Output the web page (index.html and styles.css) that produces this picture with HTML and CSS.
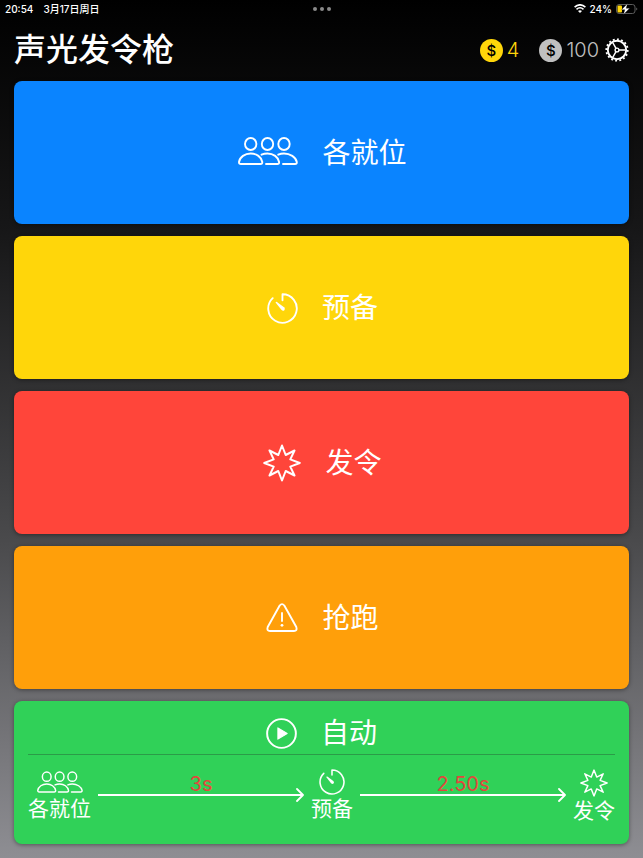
FILE: index.html
```html
<!DOCTYPE html>
<html lang="zh-CN">
<head>
    <meta charset="UTF-8">
    <meta name="viewport" content="width=device-width, initial-scale=1.0">
    <title>声光发令枪</title>
    <link rel="stylesheet" href="styles.css">
</head>
<body>
    <!-- 图标定义 -->
    <svg class="defs" aria-hidden="true">
        <symbol id="icon-people" viewBox="0 0 60 28">
            <g fill="none" stroke="currentColor" stroke-width="1.9" stroke-linejoin="round" stroke-linecap="round">
                <ellipse cx="12.700" cy="7" rx="5.700" ry="6"/>
                <ellipse cx="29.500" cy="7" rx="5.700" ry="6"/>
                <ellipse cx="46" cy="7" rx="5.700" ry="6"/>
                <path d="M3 27H22.500Q24.500 27 24.300 25C23.500 20 18.500 16.500 12.700 16.500S1.800 20 1 25Q.9 27 3 27Z"/>
                <path d="M23.500 17.700C25.300 16.900 27.300 16.500 29.500 16.500C35.300 16.500 40.300 20 41.100 25Q41.300 27 39.300 27H28"/>
                <path d="M40.200 17.700C42 16.900 43.900 16.500 46 16.500C52 16.500 57.800 20 58.800 25Q59 27 57 27H45"/>
            </g>
        </symbol>
        <symbol id="icon-timer" viewBox="0 0 30 30">
            <path d="M5.500 5A13.800 13.800 0 1 0 15 1.200V7" fill="none" stroke="currentColor" stroke-width="1.8" stroke-linecap="round" stroke-linejoin="round"/>
            <path d="M8.300 9.200Q8.600 8.300 9.600 8.700L16.500 13.800Q18 15.400 16.800 16.700Q15.400 17.900 13.900 16.300Z" fill="currentColor"/>
        </symbol>
        <symbol id="icon-burst" viewBox="0 0 38 38">
            <path d="M19 1.500L22.700 11L31.500 6.500L27.300 15.400L36.800 19L27.300 22.600L31.500 31.500L22.700 27L19 36.500L15.300 27L6.500 31.500L10.700 22.600L1.200 19L10.700 15.400L6.500 6.500L15.300 11Z" fill="none" stroke="currentColor" stroke-width="2" stroke-linejoin="round"/>
        </symbol>
        <symbol id="icon-warning" viewBox="0 0 32 30">
            <path d="M13.700 2.500Q16 -.3 18.300 2.500L30.300 24Q31.500 28 28 28H4Q.5 28 1.700 24Z" fill="none" stroke="currentColor" stroke-width="1.900" stroke-linejoin="round"/>
            <path d="M16 10V18" stroke="currentColor" stroke-width="1.900" stroke-linecap="round"/>
            <circle cx="16" cy="22.300" r="1.400" fill="currentColor"/>
        </symbol>
        <symbol id="icon-play" viewBox="0 0 30 30">
            <circle cx="15" cy="15" r="13.900" fill="none" stroke="currentColor" stroke-width="1.900"/>
            <path d="M11.500 9.500L20.500 15L11.500 20.500Z" fill="currentColor" stroke="currentColor" stroke-linejoin="round"/>
        </symbol>
        <symbol id="icon-arrow" viewBox="0 0 10 14">
            <path d="M3 1L9 7L3 13" fill="none" stroke="currentColor" stroke-width="1.800" stroke-linecap="round" stroke-linejoin="round"/>
        </symbol>
    </svg>

    <div class="status-bar">
        <div class="status-left">
            <span>20:54</span>
            <span>3月17日周日</span>
        </div>
        <div class="dots"><i></i><i></i><i></i></div>
        <div class="status-right">
            <svg class="wifi" viewBox="0 0 12 9" aria-hidden="true">
                <g fill="none" stroke="currentColor" stroke-width="1.600">
                    <path d="M.6 3.200Q6 -1.600 11.400 3.200"/>
                    <path d="M2.500 5.300Q6 2.200 9.500 5.300"/>
                </g>
                <path d="M4 7Q6 5.300 8 7L6 9Z" fill="currentColor"/>
            </svg>
            <span>24%</span>
            <svg class="battery" viewBox="0 0 22 12" aria-hidden="true">
                <rect x=".5" y="1.500" width="18.500" height="9" rx="2.500" fill="none" stroke="#5c5c5c"/>
                <path d="M20.300 4.500Q22.300 6 20.300 7.500Z" fill="#6c6c6c"/>
                <rect x="1.500" y="2.500" width="4.500" height="7" rx="1" fill="#ffd60a"/>
                <path d="M11.500 .5L5.500 6.700H8.800L7.500 11.500L13.700 5.300H10.200Z" fill="#fff" stroke="#000" stroke-width=".3"/>
            </svg>
        </div>
    </div>

    <header class="header">
        <h1>声光发令枪</h1>
        <div class="coins">
            <div class="coin gold"><span class="coin-icon">$</span><span>4</span></div>
            <div class="coin silver"><span class="coin-icon">$</span><span>100</span></div>
            <button class="settings" aria-label="设置">
                <svg viewBox="0 0 24 24" aria-hidden="true">
                    <g fill="none" stroke="currentColor">
                        <circle cx="12" cy="12" r="9.200" stroke-width="1.900"/>
                        <circle cx="12" cy="12" r="10.700" stroke-width="1.800" pathLength="64" stroke-dasharray="1.800 2.200"/>
                        <circle cx="12" cy="12" r="1.900" stroke-width="1.400"/>
                        <path d="M14 12H20.500M11 10.300L7.700 4.500M11 13.700L7.700 19.500" stroke-width="1.500"/>
                    </g>
                </svg>
            </button>
        </div>
    </header>

    <main class="panel">
        <button class="card blue">
            <svg class="icon-people" aria-hidden="true"><use href="#icon-people"/></svg>
            <span>各就位</span>
        </button>
        <button class="card yellow">
            <svg class="icon-round" aria-hidden="true"><use href="#icon-timer"/></svg>
            <span>预备</span>
        </button>
        <button class="card red">
            <svg class="icon-burst" aria-hidden="true"><use href="#icon-burst"/></svg>
            <span>发令</span>
        </button>
        <button class="card orange">
            <svg class="icon-warning" aria-hidden="true"><use href="#icon-warning"/></svg>
            <span>抢跑</span>
        </button>

        <section class="card green">
            <button class="auto">
                <svg class="icon-round" aria-hidden="true"><use href="#icon-play"/></svg>
                <span>自动</span>
            </button>
            <div class="steps">
                <div class="step">
                    <svg class="step-people" aria-hidden="true"><use href="#icon-people"/></svg>
                    <span>各就位</span>
                </div>
                <div class="delay">
                    <span>3s</span>
                    <div class="line"><svg aria-hidden="true"><use href="#icon-arrow"/></svg></div>
                </div>
                <div class="step">
                    <svg class="step-timer" aria-hidden="true"><use href="#icon-timer"/></svg>
                    <span>预备</span>
                </div>
                <div class="delay">
                    <span>2.50s</span>
                    <div class="line"><svg aria-hidden="true"><use href="#icon-arrow"/></svg></div>
                </div>
                <div class="step">
                    <svg class="step-burst" aria-hidden="true"><use href="#icon-burst"/></svg>
                    <span>发令</span>
                </div>
            </div>
        </section>
    </main>
</body>
</html>
```
FILE: styles.css
```css
* {
    box-sizing: border-box;
}

body {
    margin: 0;
    min-height: 100vh;
    display: flex;
    flex-direction: column;
    background: linear-gradient(#000, #171718 27%, #4a4a4c 63%, #8e8e93);
    color: #fff;
    font-family: Inter, "Noto Sans CJK SC", sans-serif;
}

button {
    border: none;
    padding: 0;
    background: none;
    color: inherit;
    font: inherit;
    cursor: pointer;
}

svg {
    display: block;
    flex: none;
}

.defs {
    position: absolute;
    width: 0;
    height: 0;
}

/* 状态栏 */
.status-bar {
    display: grid;
    grid-template-columns: 1fr auto 1fr;
    align-items: center;
    height: 17px;
    padding: 0 5px;
    font-size: 10px;
    font-weight: 500;
}

.status-left,
.status-right {
    display: flex;
    align-items: center;
}

.status-left {
    gap: 10px;
}

.status-right {
    justify-content: flex-end;
    gap: 4px;
}

.dots {
    display: flex;
    gap: 3px;
}

.dots i {
    width: 4px;
    height: 4px;
    border-radius: 50%;
    background: #8a8a8a;
}

.wifi {
    width: 12px;
    height: 9px;
}

.battery {
    width: 22px;
    height: 12px;
}

/* 标题 */
.header {
    display: flex;
    align-items: center;
    justify-content: space-between;
    height: 64px;
    padding: 2px 14px 0;
}

h1 {
    margin: 0;
    font-size: 32px;
    font-weight: 500;
    line-height: 40px;
}

.coins,
.coin {
    display: flex;
    align-items: center;
}

.coin {
    gap: 4px;
    font-size: 20px;
    font-weight: 300;
}

.coin-icon {
    width: 23px;
    height: 23px;
    border-radius: 50%;
    color: #000;
    font-size: 15px;
    font-weight: 500;
    line-height: 23px;
    text-align: center;
}

.gold {
    margin-right: 20px;
    color: #ffd60a;
}

.gold .coin-icon {
    background: #ffd60a;
}

.silver {
    margin-right: 6px;
    color: #c0c0c0;
}

.silver .coin-icon {
    background: #c0c0c0;
}

.settings svg {
    width: 24px;
    height: 24px;
}

/* 按钮面板 */
.panel {
    flex: 1;
    display: grid;
    grid-auto-rows: 1fr;
    gap: 12px;
    padding: 0 14px 14px;
}

.card {
    display: flex;
    align-items: center;
    justify-content: center;
    gap: 24px;
    padding: 1px 0 0 2px;
    border-radius: 8px;
    box-shadow: 0 1px 4px rgba(0, 0, 0, 0.4);
    font-size: 28px;
    font-weight: 400;
    line-height: 40px;
}

.blue {
    background: #0a84ff;
}

.yellow {
    background: #ffd60a;
}

.red {
    background: #ff453a;
}

.orange {
    background: #ff9f0a;
}

.green {
    flex-direction: column;
    align-items: stretch;
    justify-content: flex-start;
    gap: 0;
    padding: 0 14px;
    background: #30d158;
}

.icon-people {
    width: 60px;
    height: 28px;
    margin-bottom: 4px;
}

.icon-round {
    width: 31px;
    height: 31px;
}

.icon-burst {
    width: 38px;
    height: 38px;
}

.icon-warning {
    width: 32px;
    height: 30px;
}

/* 自动流程 */
.auto {
    display: flex;
    align-items: center;
    justify-content: center;
    gap: 24px;
    padding: 12px 0 1px;
    border-bottom: 1px solid #2b9b48;
}

.steps {
    display: flex;
    align-items: flex-start;
    gap: 7px;
    padding-top: 14px;
    font-size: 21px;
    line-height: 28px;
}

.step {
    display: flex;
    flex-direction: column;
    align-items: center;
}

.step-people {
    width: 46px;
    height: 26px;
}

.step-timer {
    width: 26px;
    height: 26px;
}

.step-burst {
    width: 32px;
    height: 28px;
}

.delay {
    flex: 1;
    padding-top: 4px;
    color: #e0483c;
    font-size: 20px;
    line-height: 22px;
    text-align: center;
}

.delay span {
    display: block;
}

.line {
    display: flex;
    align-items: center;
    height: 0;
    color: #fff;
}

.line::before {
    content: "";
    flex: 1;
    height: 2px;
    margin-right: -9px;
    background: #fff;
}

.line svg {
    width: 10px;
    height: 14px;
}
```
